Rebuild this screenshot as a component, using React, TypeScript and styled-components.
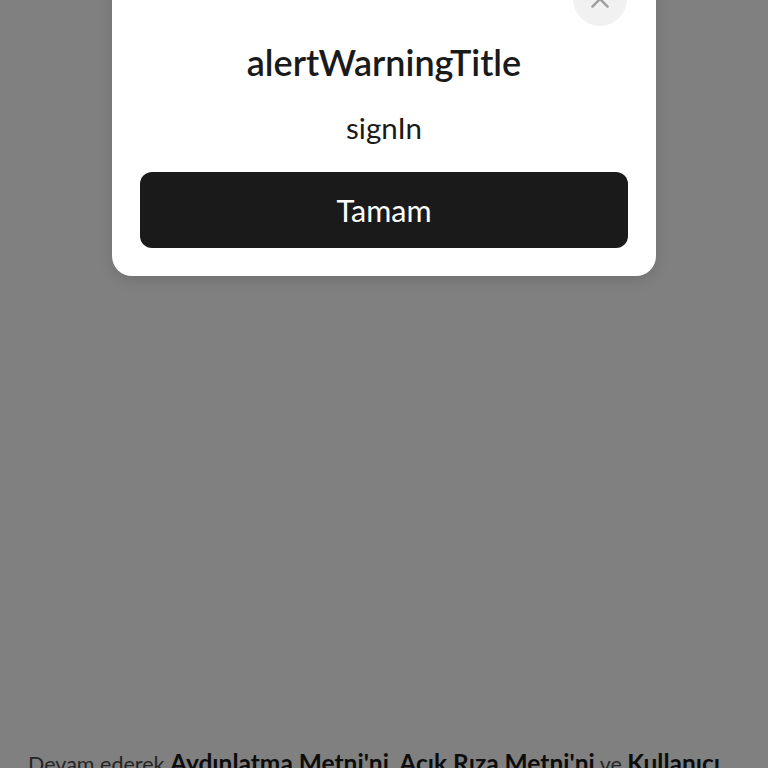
import React from "react";
import styled, { createGlobalStyle } from "styled-components";

const GlobalStyle = createGlobalStyle`
  html, body {
    margin: 0;
    padding: 0;
    background: #808080;
    overflow: hidden;
  }
  body {
    font-family: Lato, "Noto Sans", sans-serif;
  }
`;

const Page = styled.div`
  width: 768px;
  height: 768px;
  background: #808080;
  display: flex;
  flex-direction: column;
  overflow: hidden;
`;

const Modal = styled.div`
  position: relative;
  width: 544px;
  box-sizing: border-box;
  margin: -40px auto 0;
  padding: 82px 28px 28px;
  background: #ffffff;
  border-radius: 20px;
  box-shadow: 0 4px 14px rgba(0, 0, 0, 0.12);
  display: flex;
  flex-direction: column;
  align-items: center;
`;

const CloseButton = styled.button`
  position: absolute;
  top: 12px;
  right: 29px;
  width: 54px;
  height: 54px;
  border: none;
  border-radius: 50%;
  background: #f1f1f1;
  display: flex;
  align-items: center;
  justify-content: center;
  padding: 0;
  cursor: pointer;
`;

const Title = styled.h2`
  margin: 0;
  font-size: 36px;
  line-height: 40px;
  font-weight: 600;
  color: #1a1a1a;
`;

const Message = styled.p`
  margin: 30px 0 0;
  font-size: 29.5px;
  line-height: 32px;
  font-weight: 400;
  color: #1a1a1a;
`;

const PrimaryButton = styled.button`
  margin-top: 28px;
  width: 100%;
  height: 76px;
  border: none;
  border-radius: 12px;
  background: #1a1a1a;
  color: #ffffff;
  font-family: inherit;
  font-size: 30.5px;
  font-weight: 400;
  cursor: pointer;
`;

const Footer = styled.p`
  margin: 472px 0 0;
  padding: 0 28px;
  font-size: 21.5px;
  line-height: 30px;
  color: #262626;
`;

const Link = styled.strong`
  font-size: 24.5px;
  font-weight: 700;
  color: #0d0d0d;
`;

export default function App() {
  return (
    <>
      <GlobalStyle />
      <Page>
        <Modal>
          <CloseButton aria-label="close">
            <svg width="26" height="26" viewBox="0 0 24 24" fill="none">
              <path
                d="M5 5L19 19M19 5L5 19"
                stroke="#9c9c9c"
                strokeWidth="2.2"
                strokeLinecap="round"
              />
            </svg>
          </CloseButton>
          <Title>alertWarningTitle</Title>
          <Message>signIn</Message>
          <PrimaryButton>Tamam</PrimaryButton>
        </Modal>
        <Footer>
          Devam ederek <Link>Aydınlatma Metni'ni</Link>, <Link>Açık Rıza Metni'ni</Link> ve{" "}
          <Link>Kullanıcı Sözleşmesi'ni</Link> kabul etmiş olursunuz.
        </Footer>
      </Page>
    </>
  );
}
